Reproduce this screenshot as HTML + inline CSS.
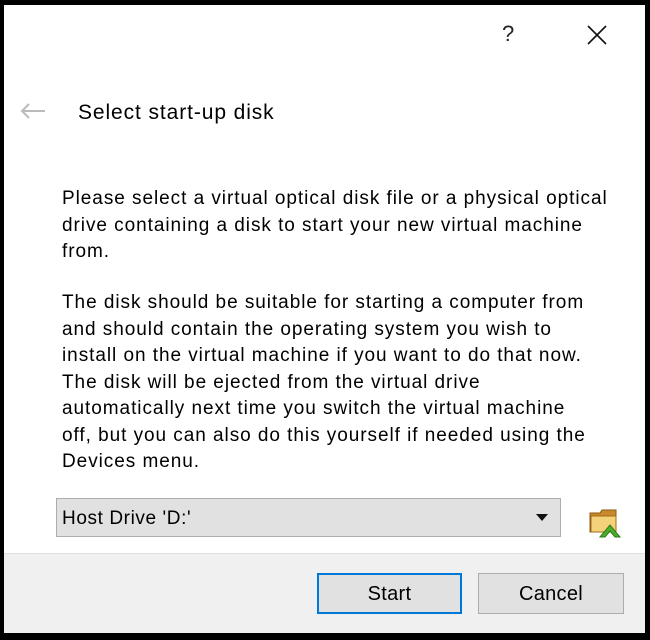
<!DOCTYPE html>
<html><head><meta charset="utf-8"><style>
*{margin:0;padding:0;box-sizing:border-box}
html,body{width:650px;height:640px;background:#000;overflow:hidden}
#win{position:absolute;left:4px;top:5px;width:641px;height:628px;background:#fff;font-family:"Liberation Sans",sans-serif;color:#000}
.abs{position:absolute;white-space:nowrap}
.t{font-size:19px;letter-spacing:0.95px;line-height:26.5px;left:58px}
#footer{position:absolute;left:0;top:548px;width:641px;height:80px;background:#f0f0f0;border-top:1px solid #dfdfdf}
.btn{position:absolute;top:19px;height:41px;background:#e1e1e1;border:1px solid #adadad;font-size:20px;letter-spacing:0.3px;text-align:center;line-height:38px}
</style></head><body>
<div id="win">
  <div class="abs" style="left:498px;top:16px;font-size:22px;color:#222">?</div>
  <svg class="abs" style="left:583px;top:20px" width="20" height="20"><path d="M1 1L19 19M19 1L1 19" stroke="#111" stroke-width="1.6"/></svg>
  <svg class="abs" style="left:16px;top:98px" width="26" height="16"><path d="M2 8H25M9 1L2 8L9 15" stroke="#bbb" stroke-width="2" fill="none"/></svg>
  <div class="abs" style="left:74px;top:96px;font-size:21px;letter-spacing:0.9px">Select start-up disk</div>
  <div class="abs t" style="top:181px">Please select a virtual optical disk file or a physical optical<br>drive containing a disk to start your new virtual machine<br>from.</div>
  <div class="abs t" style="top:285px">The disk should be suitable for starting a computer from<br>and should contain the operating system you wish to<br>install on the virtual machine if you want to do that now.<br>The disk will be ejected from the virtual drive<br>automatically next time you switch the virtual machine<br>off, but you can also do this yourself if needed using the<br>Devices menu.</div>
  <div class="abs" style="left:52px;top:493px;width:505px;height:39px;background:#e1e1e1;border:1px solid #adadad;font-size:19px;letter-spacing:0.6px;line-height:39px;padding-left:5px">Host Drive 'D:'</div>
  <svg class="abs" style="left:532px;top:509px" width="12" height="7"><path d="M0 0H12L6 7Z" fill="#111"/></svg>
  <svg class="abs" style="left:584px;top:500px" width="34" height="34">
    <path d="M2 8h10l2-3h14v22H2z" fill="#c88a2a" stroke="#8a5a14"/>
    <path d="M3 11h25v16H3z" fill="#f3d27a" stroke="#a46a1c"/>
    <path d="M12 32l10-12 10 12h-5l-5-6-5 6z" fill="#4caf2a" stroke="#2c7a14"/>
  </svg>
  <div id="footer">
    <div class="btn" style="left:313px;width:145px;border:2px solid #0078d7;line-height:39px">Start</div>
    <div class="btn" style="left:474px;width:146px;line-height:40px">Cancel</div>
  </div>
</div>
</body></html>
